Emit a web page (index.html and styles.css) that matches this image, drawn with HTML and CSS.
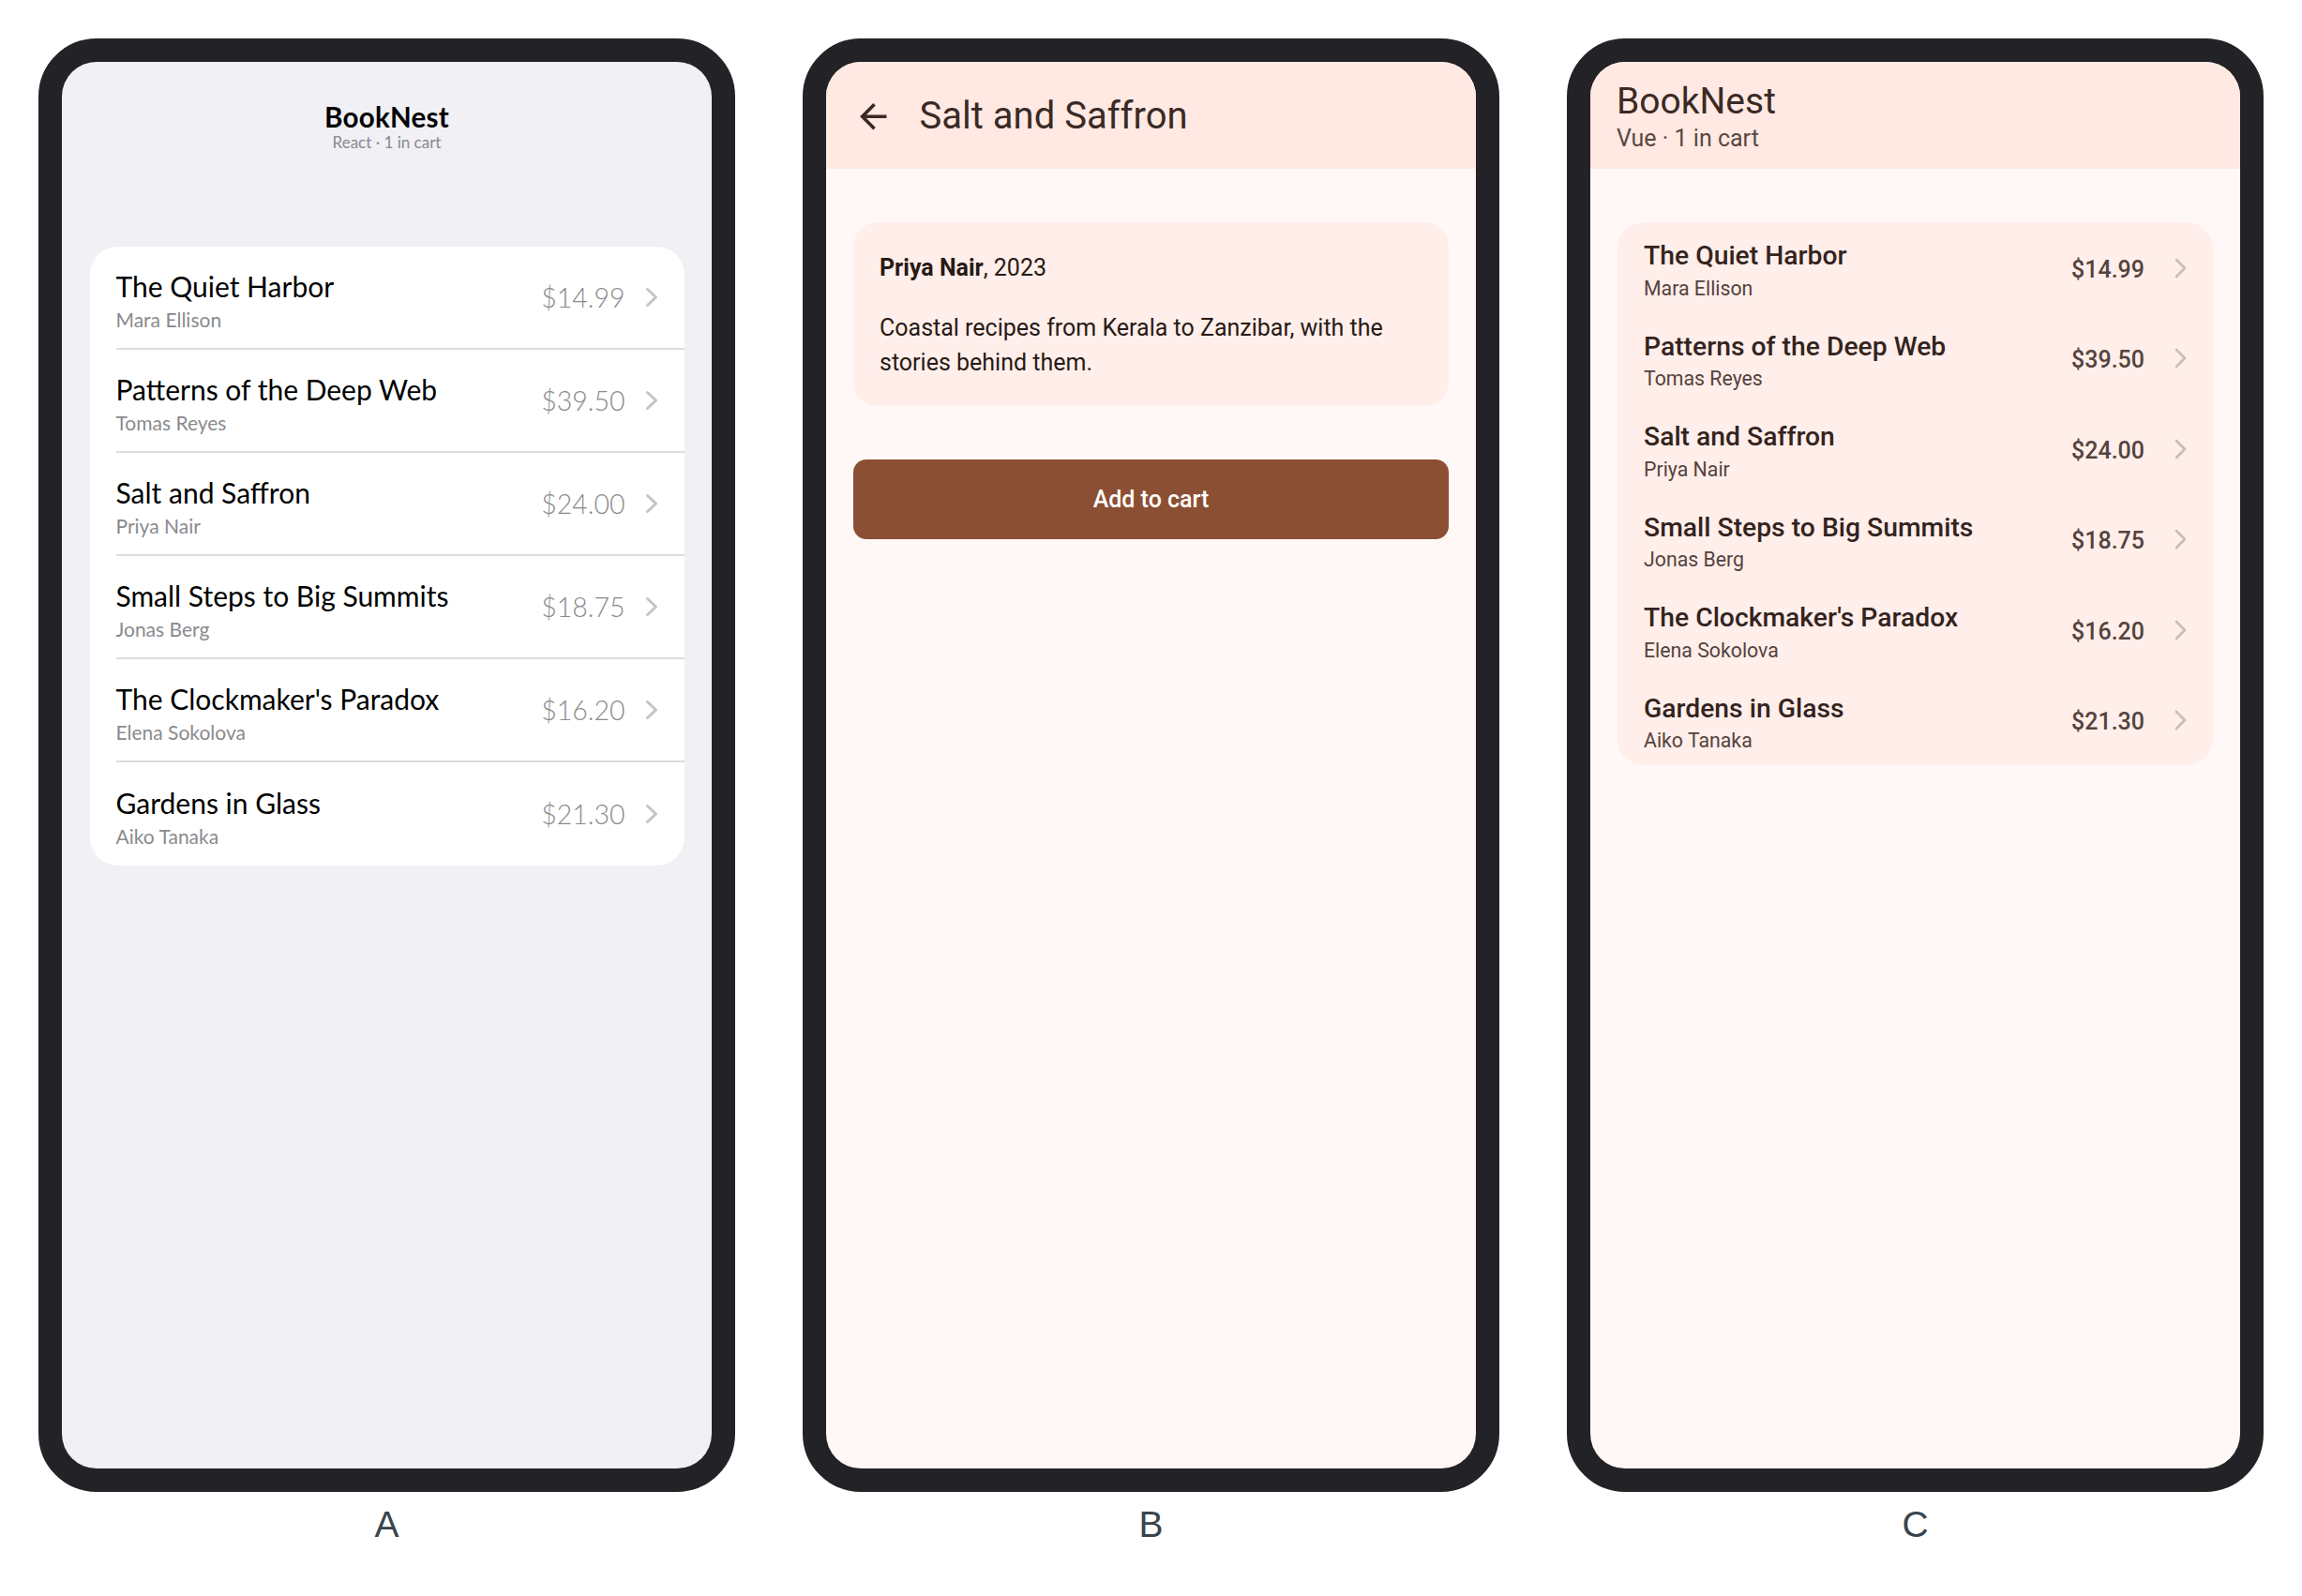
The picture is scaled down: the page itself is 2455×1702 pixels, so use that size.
FILE: index.html
```html
<!DOCTYPE html>
<html lang="en">
<head>
<meta charset="utf-8">
<title>BookNest – three screens</title>
<link rel="stylesheet" href="styles.css">
</head>
<body>
<div class="stage">

  <div class="device">
    <div class="phone">
      <div class="screen screen-a">
        <div class="a-head">
          <div class="a-title">BookNest</div>
          <div class="a-sub">React · 1 in cart</div>
        </div>
        <div class="a-list">
          <div class="a-row"><div class="a-row-inner">
            <div class="a-text"><div class="a-book">The Quiet Harbor</div><div class="a-author">Mara Ellison</div></div>
            <div class="a-price">$14.99</div>
            <svg class="a-chev" viewBox="0 0 14 22"><polyline points="2.5,2.5 11.5,11 2.5,19.5"/></svg>
          </div></div>
          <div class="a-row"><div class="a-row-inner">
            <div class="a-text"><div class="a-book">Patterns of the Deep Web</div><div class="a-author">Tomas Reyes</div></div>
            <div class="a-price">$39.50</div>
            <svg class="a-chev" viewBox="0 0 14 22"><polyline points="2.5,2.5 11.5,11 2.5,19.5"/></svg>
          </div></div>
          <div class="a-row"><div class="a-row-inner">
            <div class="a-text"><div class="a-book">Salt and Saffron</div><div class="a-author">Priya Nair</div></div>
            <div class="a-price">$24.00</div>
            <svg class="a-chev" viewBox="0 0 14 22"><polyline points="2.5,2.5 11.5,11 2.5,19.5"/></svg>
          </div></div>
          <div class="a-row"><div class="a-row-inner">
            <div class="a-text"><div class="a-book">Small Steps to Big Summits</div><div class="a-author">Jonas Berg</div></div>
            <div class="a-price">$18.75</div>
            <svg class="a-chev" viewBox="0 0 14 22"><polyline points="2.5,2.5 11.5,11 2.5,19.5"/></svg>
          </div></div>
          <div class="a-row"><div class="a-row-inner">
            <div class="a-text"><div class="a-book">The Clockmaker's Paradox</div><div class="a-author">Elena Sokolova</div></div>
            <div class="a-price">$16.20</div>
            <svg class="a-chev" viewBox="0 0 14 22"><polyline points="2.5,2.5 11.5,11 2.5,19.5"/></svg>
          </div></div>
          <div class="a-row"><div class="a-row-inner">
            <div class="a-text"><div class="a-book">Gardens in Glass</div><div class="a-author">Aiko Tanaka</div></div>
            <div class="a-price">$21.30</div>
            <svg class="a-chev" viewBox="0 0 14 22"><polyline points="2.5,2.5 11.5,11 2.5,19.5"/></svg>
          </div></div>
        </div>
      </div>
    </div>
    <div class="label">A</div>
  </div>

  <div class="device">
    <div class="phone">
      <div class="screen screen-m">
        <div class="m-bar b-bar">
          <svg class="back" viewBox="0 0 24 24"><path d="M20 11H7.83l5.59-5.59L12 4l-8 8 8 8 1.41-1.41L7.83 13H20v-2z"/></svg>
          <div class="b-title">Salt and Saffron</div>
        </div>
        <div class="m-content">
          <div class="b-card">
            <div class="b-meta"><strong>Priya Nair</strong>, 2023</div>
            <p class="b-desc">Coastal recipes from Kerala to Zanzibar, with the stories behind them.</p>
          </div>
          <button class="b-btn" type="button">Add to cart</button>
        </div>
      </div>
    </div>
    <div class="label">B</div>
  </div>

  <div class="device">
    <div class="phone">
      <div class="screen screen-m">
        <div class="m-bar c-bar">
          <div class="c-title">BookNest</div>
          <div class="c-sub">Vue · 1 in cart</div>
        </div>
        <div class="m-content">
          <div class="c-card">
            <div class="c-row">
              <div class="c-text"><div class="c-book">The Quiet Harbor</div><div class="c-author">Mara Ellison</div></div>
              <div class="c-price">$14.99</div>
              <svg class="c-chev" viewBox="0 0 15 24"><polyline points="3,3 12,12 3,21"/></svg>
            </div>
            <div class="c-row">
              <div class="c-text"><div class="c-book">Patterns of the Deep Web</div><div class="c-author">Tomas Reyes</div></div>
              <div class="c-price">$39.50</div>
              <svg class="c-chev" viewBox="0 0 15 24"><polyline points="3,3 12,12 3,21"/></svg>
            </div>
            <div class="c-row">
              <div class="c-text"><div class="c-book">Salt and Saffron</div><div class="c-author">Priya Nair</div></div>
              <div class="c-price">$24.00</div>
              <svg class="c-chev" viewBox="0 0 15 24"><polyline points="3,3 12,12 3,21"/></svg>
            </div>
            <div class="c-row">
              <div class="c-text"><div class="c-book">Small Steps to Big Summits</div><div class="c-author">Jonas Berg</div></div>
              <div class="c-price">$18.75</div>
              <svg class="c-chev" viewBox="0 0 15 24"><polyline points="3,3 12,12 3,21"/></svg>
            </div>
            <div class="c-row">
              <div class="c-text"><div class="c-book">The Clockmaker's Paradox</div><div class="c-author">Elena Sokolova</div></div>
              <div class="c-price">$16.20</div>
              <svg class="c-chev" viewBox="0 0 15 24"><polyline points="3,3 12,12 3,21"/></svg>
            </div>
            <div class="c-row">
              <div class="c-text"><div class="c-book">Gardens in Glass</div><div class="c-author">Aiko Tanaka</div></div>
              <div class="c-price">$21.30</div>
              <svg class="c-chev" viewBox="0 0 15 24"><polyline points="3,3 12,12 3,21"/></svg>
            </div>
          </div>
        </div>
      </div>
    </div>
    <div class="label">C</div>
  </div>

</div>
</body>
</html>
```

FILE: styles.css
```css
html, body {
  margin: 0;
  padding: 0;
  background: #ffffff;
}
body {
  width: 2455px;
  height: 1702px;
  overflow: hidden;
}
.stage {
  display: flex;
  gap: 72px;
  padding: 41px 41px 0 41px;
}
.device {
  width: 743px;
  display: flex;
  flex-direction: column;
  align-items: center;
}
.phone {
  width: 743px;
  height: 1550px;
  box-sizing: border-box;
  border: 25px solid #232226;
  border-radius: 62px;
  background: #232226;
}
.screen {
  height: 100%;
  box-sizing: border-box;
  border-radius: 37px;
  overflow: hidden;
}
.label {
  margin-top: 12px;
  font-family: "Liberation Sans", Arial, sans-serif;
  font-size: 39px;
  line-height: 45px;
  color: #38444d;
}

/* ---------- Screen A (iOS style) ---------- */
.screen-a {
  background: #f0f0f5;
  font-family: Lato, "Open Sans", sans-serif;
  padding: 42px 29.5px 0 29.5px;
}
.a-head {
  text-align: center;
}
.a-title {
  font-size: 29.5px;
  font-weight: 700;
  line-height: 34px;
  letter-spacing: 0.3px;
  color: #000000;
}
.a-sub {
  font-size: 17px;
  line-height: 20px;
  color: #8a8a8e;
}
.a-list {
  margin-top: 101px;
  background: #ffffff;
  border-radius: 30px;
  overflow: hidden;
}
.a-row {
  height: 110px;
  padding-left: 28px;
  display: flex;
}
.a-row-inner {
  flex: 1;
  display: flex;
  align-items: center;
  box-sizing: border-box;
  border-bottom: 2px solid #dcdce0;
  padding-right: 28px;
}
.a-row:last-child .a-row-inner {
  border-bottom: none;
}
.a-text {
  flex: 1;
  padding-top: 5px;
}
.a-book {
  font-size: 30px;
  line-height: 36px;
  color: #000000;
}
.a-author {
  margin-top: 6px;
  font-size: 21px;
  line-height: 24px;
  color: #8a8a8e;
}
.a-price {
  font-size: 28.5px;
  font-weight: 300;
  color: #8a8a8e;
}
.a-chev {
  width: 14px;
  height: 22px;
  margin-left: 21px;
  fill: none;
  stroke: #c4c4c8;
  stroke-width: 3;
  stroke-linecap: round;
  stroke-linejoin: round;
}

/* ---------- Screens B & C (Material style) ---------- */
.screen-m {
  background: #fff8f6;
  font-family: Roboto, "Noto Sans", sans-serif;
  color: #271a16;
}
.m-bar {
  height: 114px;
  box-sizing: border-box;
  background: #ffe9e2;
  display: flex;
}
.b-bar {
  align-items: center;
  padding: 2px 29px 0 29px;
}
.back {
  width: 42.6px;
  height: 42.6px;
  fill: #3a2a25;
  flex: none;
}
.b-title {
  margin-left: 28px;
  font-size: 40px;
  line-height: 1;
  color: #3a2a25;
}
.m-content {
  padding: 56.7px 29px 0 29px;
}
.b-card {
  background: #ffeee9;
  border-radius: 26px;
  padding: 30px 28px 28px 28px;
}
.b-meta {
  font-size: 25px;
  line-height: 37.5px;
}
.b-meta strong {
  font-weight: 700;
}
.b-desc {
  margin: 26.6px 0 0 0;
  font-size: 25px;
  line-height: 37px;
}
.b-btn {
  display: block;
  width: 100%;
  height: 85px;
  margin-top: 57px;
  border: none;
  border-radius: 14px;
  background: #8b4f33;
  color: #ffffff;
  font-family: Roboto, "Noto Sans", sans-serif;
  font-size: 25px;
  font-weight: 500;
}
.c-bar {
  flex-direction: column;
  justify-content: center;
  padding: 3px 0 0 28px;
}
.c-title {
  font-size: 39px;
  line-height: 46px;
  color: #3a2a25;
}
.c-sub {
  font-size: 25px;
  line-height: 34px;
  color: #5a4842;
}
.c-card {
  background: #ffeee9;
  border-radius: 28px;
}
.c-row {
  height: 96.5px;
  display: flex;
  align-items: center;
  padding: 0 27px 0 28px;
}
.c-text {
  flex: 1;
  padding-top: 8px;
}
.c-book {
  font-size: 28.3px;
  font-weight: 500;
  line-height: 34px;
  color: #33231e;
}
.c-author {
  margin-top: 3.6px;
  font-size: 21.3px;
  line-height: 28px;
  color: #54433e;
}
.c-price {
  margin-top: 5px;
  font-size: 25px;
  font-weight: 500;
  color: #54433e;
}
.c-chev {
  width: 15px;
  height: 24px;
  margin-left: 31px;
  margin-top: 2px;
  fill: none;
  stroke: #c9bcb7;
  stroke-width: 2.6;
  stroke-linecap: round;
  stroke-linejoin: round;
}
```
